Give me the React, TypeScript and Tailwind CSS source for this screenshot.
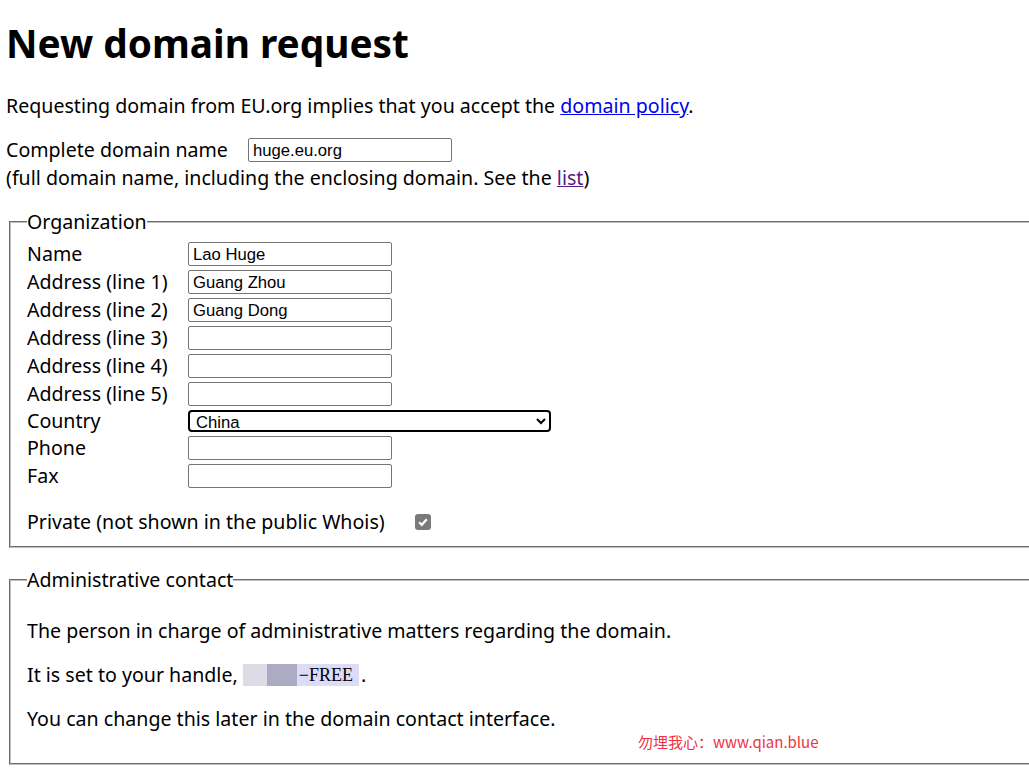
const orgRows = [
  { label: "Name", value: "Lao Huge" },
  { label: "Address (line 1)", value: "Guang Zhou" },
  { label: "Address (line 2)", value: "Guang Dong" },
  { label: "Address (line 3)", value: "" },
  { label: "Address (line 4)", value: "" },
  { label: "Address (line 5)", value: "" },
];

function TextInput({ value }: { value: string }) {
  return (
    <input
      type="text"
      defaultValue={value}
      className="w-[204px] h-[24px] border border-[#767676] rounded-[2px] px-[4px] pt-[1px] text-[16.67px] font-['Liberation_Sans',Arial,sans-serif] text-black bg-white"
    />
  );
}

function Row({ label, children, h = "h-[28px]" }: { label: string; children: React.ReactNode; h?: string }) {
  return (
    <div className={`flex items-center ${h}`}>
      <div className="w-[161px] shrink-0">{label}</div>
      {children}
    </div>
  );
}

export default function App() {
  return (
    <div className="w-[1029px] h-[783px] overflow-hidden bg-white text-black text-[19.6px] leading-[28px] font-['Noto_Sans','Noto_Sans_CJK_SC',sans-serif] pl-[6px] relative">
      <h1 className="mt-[17px] h-[52px] leading-[52px] text-[38.8px] font-bold">New domain request</h1>

      <p className="mt-[23px] h-[28px]">
        Requesting domain from EU.org implies that you accept the{" "}
        <a href="#" className="text-[#0000ee] underline">
          domain policy
        </a>
        .
      </p>

      <div className="mt-[16px] flex items-center h-[28px]">
        <span className="w-[242px] shrink-0">Complete domain name</span>
        <TextInput value="huge.eu.org" />
      </div>
      <p className="h-[28px]">
        (full domain name, including the enclosing domain. See the{" "}
        <a href="#" className="text-[#551a8b] underline">
          list
        </a>
        )
      </p>

      <fieldset className="mt-[16px] ml-[3px] w-[1060px] border-2 [border-style:groove] border-[#c0c0c0] pl-[16px] pt-[4px] pb-[10px]">
        <legend className="h-[28px] leading-[28px]">Organization</legend>
        {orgRows.map((r) => (
          <Row key={r.label} label={r.label}>
            <TextInput value={r.value} />
          </Row>
        ))}
        <Row label="Country" h="h-[26px]">
          <select
            defaultValue="China"
            className="w-[363px] h-[22px] border-2 border-black rounded-[4px] text-[16.67px] font-['Liberation_Sans',Arial,sans-serif] pl-[2px] bg-white"
          >
            <option>China</option>
          </select>
        </Row>
        <Row label="Phone">
          <TextInput value="" />
        </Row>
        <Row label="Fax">
          <TextInput value="" />
        </Row>
        <div className="mt-[18px] flex items-center h-[28px]">
          <span>Private (not shown in the public Whois)</span>
          <span className="ml-[30px] w-[16px] h-[16px] rounded-[3px] bg-[#7a7a7a] flex items-center justify-center">
            <svg width="12" height="12" viewBox="0 0 12 12">
              <path d="M2.2 6.2 L4.8 8.8 L9.8 3.2" stroke="white" strokeWidth="2.2" fill="none" />
            </svg>
          </span>
        </div>
      </fieldset>

      <fieldset className="mt-[18px] ml-[3px] w-[1060px] border-2 [border-style:groove] border-[#c0c0c0] pl-[16px] pt-[23px] pb-[30px]">
        <legend className="h-[28px] leading-[28px]">Administrative contact</legend>
        <p className="h-[28px]">The person in charge of administrative matters regarding the domain.</p>
        <p className="mt-[16px] h-[28px] flex items-center">
          <span className="whitespace-pre">It is set to your handle, </span>
          <span className="flex items-center h-[22px] font-['Liberation_Serif',serif] text-[18px]">
            <span className="w-[24px] h-[22px] bg-[#dcdbe6]" />
            <span className="w-[30px] h-[22px] bg-[#adabc3]" />
            <span className="h-[22px] leading-[22px] bg-[#dcdcf8] pl-[2px] pr-[6px]">−FREE</span>
          </span>
          <span className="ml-[2px]">.</span>
        </p>
        <p className="mt-[16px] h-[28px]">You can change this later in the domain contact interface.</p>
      </fieldset>

      <span className="absolute left-[638px] top-[731px] text-[15px] leading-[22px] text-[#ee3344] font-['Noto_Sans_CJK_SC',sans-serif]">
        勿埋我心：www.qian.blue
      </span>
    </div>
  );
}
